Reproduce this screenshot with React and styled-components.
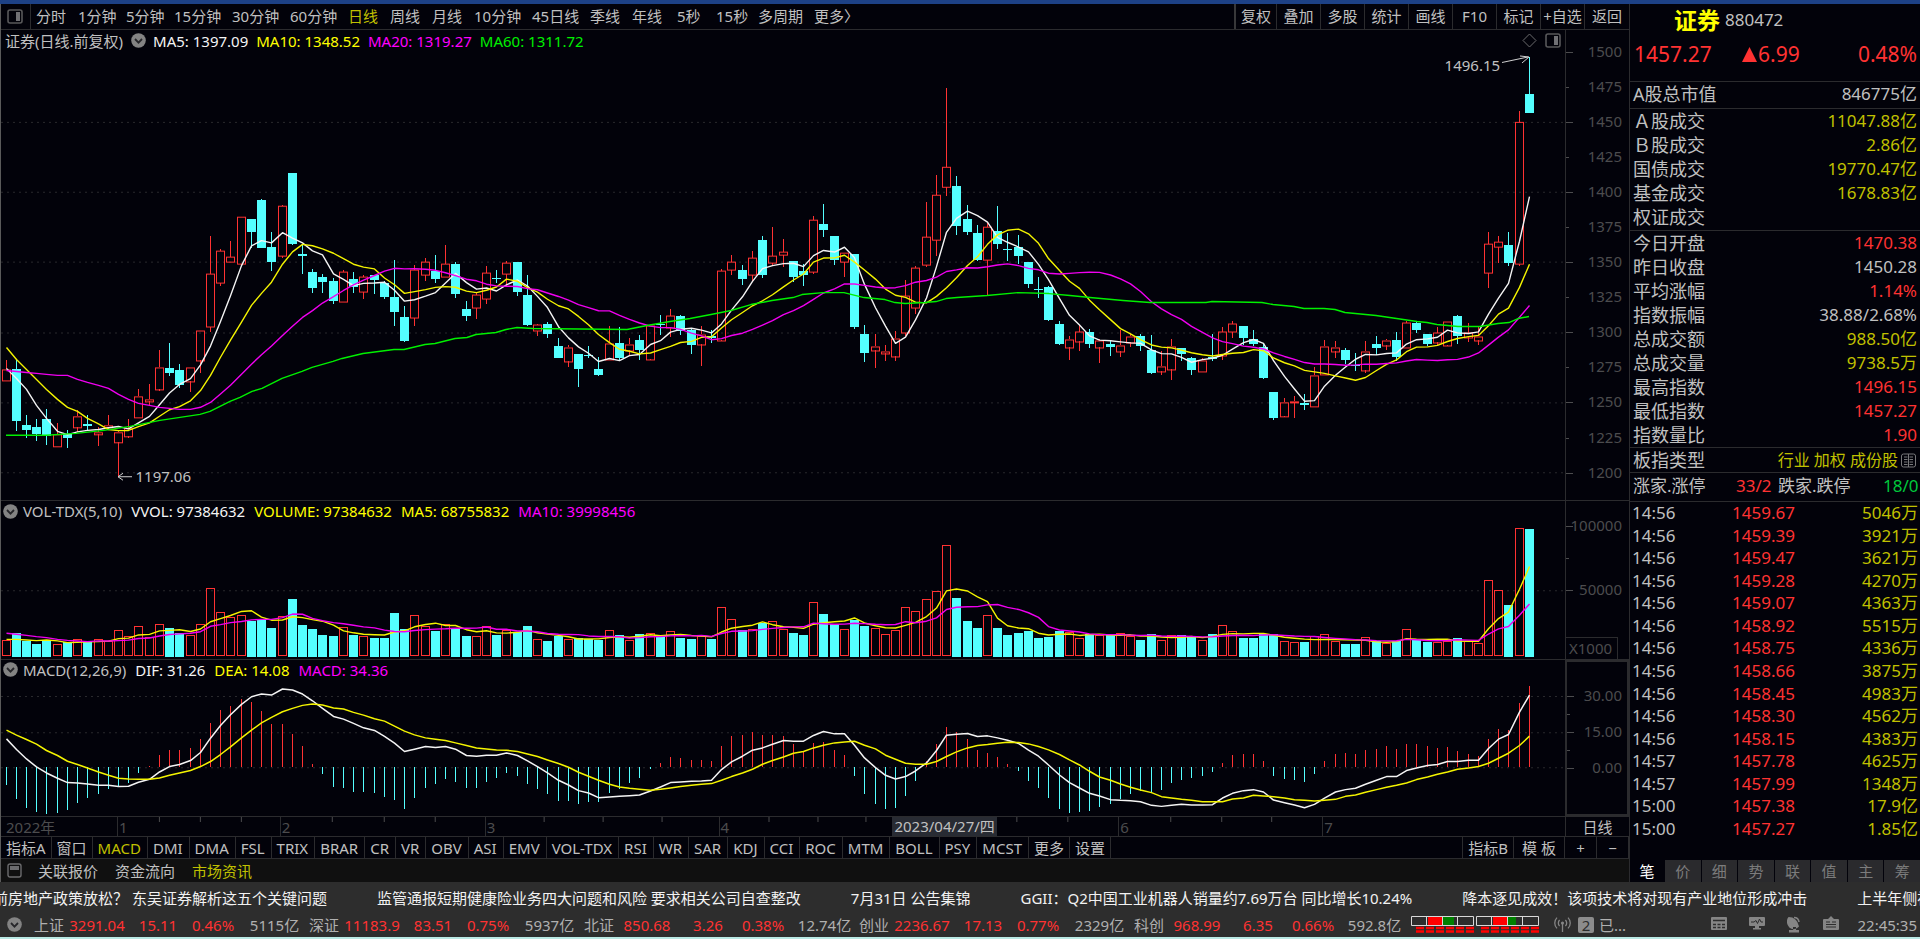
import React from "react";
import styled, { createGlobalStyle } from "styled-components";

const c = {
  bg: "#02020a",
  line: "#2b2b2e",
  text: "#c0c0c0",
  dim: "#4c4c4e",
  red: "#ff3232",
  cyan: "#54ffff",
  olive: "#c0c000",
  yellow: "#ffff00",
  magenta: "#ff00ff",
  green: "#00f000",
  bar: "#2d2d2d",
};

const GlobalStyle = createGlobalStyle`
  * { box-sizing: border-box; }
  body {
    margin: 0;
    background: ${c.bg};
    color: ${c.text};
    font-family: "Noto Sans", "Noto Sans CJK SC", sans-serif;
    font-size: 15px;
    line-height: 20px;
    overflow: hidden;
  }
  button {
    font: inherit;
    color: inherit;
    background: none;
    border: 0;
    padding: 0;
    white-space: nowrap;
    cursor: pointer;
  }
  a { color: inherit; text-decoration: none; }
  svg { display: block; flex: none; }
`;

/* ---------- chart data ---------- */

// [direction, high, body top, body bottom, low]; r = rising, c = falling
const candles = `
r 361 370 381 381|c 361 370 422 432|c 416 426 431 439|c 420 428 435 442|c 410 420 437 446
r 424 435 447 447|c 431 435 439 449|r 411 417 428 433|c 416 425 427 431|r 428 433 435 447
r 416 426 428 431|r 432 433 443 477|r 420 429 437 439|r 390 397 418 418|r 385 400 402 407
r 351 368 390 392|c 344 369 374 377|c 365 371 386 389|r 368 368 382 393|r 331 331 361 374
r 236 274 327 332|r 249 251 283 286|r 241 257 262 262|r 217 217 264 264|c 219 219 232 248
c 199 200 248 248|c 232 247 262 271|r 205 206 256 258|c 173 173 244 245|c 244 254 256 274
c 269 272 288 293|c 274 277 282 293|c 278 281 301 304|r 270 272 302 302|c 272 279 287 293
r 275 277 292 299|c 275 275 280 294|c 281 283 297 299|c 260 297 312 326|c 306 317 342 343
r 265 270 318 326|r 258 262 275 281|c 255 271 279 283|r 245 264 277 277|c 262 264 294 298
c 301 309 316 321|r 293 295 308 319|r 266 273 299 304|c 270 278 279 283|r 261 263 274 286
c 262 262 292 296|c 275 295 325 326|r 324 325 331 337|c 322 324 335 339|c 339 347 359 359
r 346 348 362 368|c 355 355 370 388|c 347 356 357 359|c 358 370 376 377|r 326 344 360 360
c 327 344 359 361|r 339 345 351 357|c 336 341 351 361|r 326 326 360 361|c 315 324 325 336
r 309 316 328 338|c 315 316 331 336|c 329 330 346 355|r 326 335 345 367|c 330 337 339 344
r 269 271 341 342|r 255 262 270 275|c 265 270 279 285|r 251 258 275 282|c 236 240 275 278
r 227 256 263 266|r 239 252 255 267|c 261 261 277 282|c 264 271 275 286|r 216 220 272 274
c 204 224 230 237|c 236 236 260 265|r 253 253 262 277|c 254 254 327 329|c 325 334 354 363
r 335 347 351 369|r 346 352 354 362|r 331 339 357 362|r 280 296 333 337|r 266 268 308 314
r 202 237 265 267|r 175 195 240 256|r 88 167 187 196|c 176 186 226 235|c 205 219 232 235
c 225 233 260 261|r 223 227 260 296|c 206 231 244 249|c 233 249 250 261|c 235 247 256 264
c 262 262 284 288|c 277 289 290 298|c 286 287 320 321|c 321 324 345 346|r 337 340 348 361
r 325 332 342 352|c 329 332 345 349|r 340 341 348 364|c 341 345 348 357|r 330 346 352 358
r 335 337 343 348|c 334 337 347 352|c 336 351 374 375|r 352 367 372 376|r 340 347 370 381
c 349 349 355 362|c 358 359 371 376|r 359 361 372 372|c 335 358 360 362|r 327 332 356 361
r 321 324 332 339|c 326 326 339 346|c 330 340 345 347|c 345 348 379 380|c 393 393 419 421
r 399 403 417 418|r 397 402 403 419|c 395 404 406 411|r 368 376 407 407|r 341 347 375 375
r 342 348 352 359|c 349 351 361 365|c 354 366 367 372|r 342 352 371 374|c 337 345 349 356
r 340 341 346 351|c 332 341 358 362|r 321 323 348 348|c 322 323 330 333|c 334 335 345 347
r 327 333 343 346|r 322 322 346 347|c 315 316 337 345|r 323 333 338 343|r 326 337 341 346
r 232 244 273 288|r 236 242 247 263|c 232 245 263 266|r 111 122 264 266|c 57 94 113 113`
  .trim()
  .split(/[|\n]/)
  .map((row) => {
    const [dir, ...v] = row.trim().split(/\s+/);
    const [high, top, bottom, low] = v.map(Number);
    return { up: dir === "r", high, top, bottom, low };
  });

// The lower panels are recorded at three units to the pixel.
const fine = (v) => 490 + v / 3;

const volume = [
  453, 432, 457, 465, 453, 465, 460, 450, 460, 450, 457, 423, 442, 412, 443, 404, 416, 432, 438, 405,
  296, 370, 384, 378, 395, 390, 416, 381, 330, 409, 420, 438, 442, 415, 438, 440, 446, 446, 371, 420,
  379, 412, 427, 405, 420, 442, 442, 412, 438, 423, 430, 412, 450, 457, 442, 450, 446, 450, 454, 423,
  438, 454, 435, 431, 438, 427, 446, 450, 440, 450, 355, 389, 424, 420, 401, 397, 420, 431, 438, 338,
  375, 405, 420, 393, 412, 417, 434, 424, 355, 367, 329, 307, 168, 326, 397, 416, 379, 416, 438, 431,
  427, 446, 443, 427, 428, 447, 435, 437, 438, 431, 442, 454, 435, 453, 438, 439, 442, 453, 435, 408,
  427, 446, 446, 435, 435, 457, 460, 460, 442, 434, 455, 465, 465, 445, 457, 461, 457, 419, 453, 460,
  460, 455, 446, 457, 461, 273, 303, 348, 117, 120,
];

const macd = [
  885, 928, 954, 965, 972, 969, 961, 938, 923, 911, 897, 888, 878, 850, 828, 796, 780, 780, 773, 746,
  698, 660, 649, 627, 637, 664, 702, 702, 732, 769, 822, 853, 890, 893, 906, 906, 909, 920, 931, 958,
  924, 893, 882, 868, 876, 893, 893, 876, 863, 850, 858, 882, 897, 912, 933, 933, 942, 935, 935, 909,
  897, 878, 863, 838, 818, 802, 803, 810, 811, 814, 768, 738, 736, 727, 735, 735, 739, 762, 782, 758,
  757, 780, 796, 857, 911, 942, 956, 953, 917, 872, 812, 762, 712, 727, 747, 779, 788, 802, 822, 843,
  872, 893, 923, 957, 968, 965, 962, 950, 942, 928, 911, 904, 905, 900, 879, 869, 863, 857, 846, 818,
  795, 792, 793, 813, 857, 867, 871, 875, 853, 813, 792, 788, 792, 780, 777, 768, 776, 762, 761, 768,
  773, 772, 784, 791, 798, 746, 716, 720, 638, 589,
];

const dif = [
  746, 778, 806, 830, 848, 864, 877, 878, 881, 885, 885, 889, 888, 876, 867, 845, 829, 823, 811, 787,
  744, 706, 674, 643, 620, 612, 615, 597, 600, 612, 632, 655, 679, 687, 700, 713, 721, 739, 759, 784,
  777, 769, 772, 769, 777, 796, 798, 795, 795, 788, 796, 812, 829, 848, 870, 884, 901, 908, 922, 920,
  918, 916, 914, 902, 890, 877, 875, 873, 872, 870, 838, 815, 798, 780, 773, 762, 751, 753, 753, 736,
  724, 731, 731, 765, 803, 832, 855, 866, 859, 842, 818, 781, 735, 732, 730, 739, 737, 743, 750, 760,
  780, 798, 824, 854, 877, 893, 909, 917, 928, 930, 931, 934, 945, 948, 945, 942, 944, 944, 943, 923,
  909, 901, 898, 905, 929, 937, 944, 952, 942, 923, 905, 898, 894, 882, 870, 859, 859, 841, 833, 826,
  823, 814, 814, 810, 810, 775, 747, 733, 666, 615,
];

const dea = [
  720, 735, 748, 762, 781, 796, 813, 823, 833, 845, 855, 864, 866, 867, 867, 863, 855, 848, 841, 829,
  814, 793, 770, 743, 720, 698, 682, 665, 655, 646, 642, 645, 654, 657, 667, 675, 686, 693, 708, 723,
  734, 743, 747, 751, 758, 766, 773, 776, 779, 780, 784, 791, 799, 809, 820, 831, 846, 858, 870, 882,
  890, 894, 897, 900, 897, 893, 889, 885, 882, 880, 870, 859, 848, 837, 822, 811, 800, 789, 784, 773,
  765, 758, 755, 753, 765, 776, 795, 807, 819, 822, 822, 814, 799, 785, 773, 766, 763, 759, 756, 757,
  761, 769, 779, 793, 809, 824, 843, 860, 870, 881, 891, 899, 907, 919, 923, 927, 930, 934, 934, 934,
  926, 923, 915, 917, 919, 923, 928, 930, 932, 930, 927, 918, 914, 906, 898, 891, 885, 878, 868, 860,
  852, 845, 837, 833, 829, 819, 804, 789, 766, 738,
];

const ma60 =
  "6,436 46,436 76,434 104,431 130,427 160,421 200,415 210,412 220,407 230,402 240,398 252,392 262,389 282,379 302,372 312,368 333,362 342,359 363,354 394,350 404,350 425,345 435,344 455,339 467,338 476,335 496,333 506,330 517,328 533,329 627,330 647,326 670,322 690,319 711,315 731,311 751,305 772,301 793,298 802,295 823,293 844,293 864,298 885,300 895,303 905,304 925,303 936,302 946,299 957,298 987,296 1018,293 1049,294 1070,296 1090,298 1123,301 1150,303 1206,303 1212,302 1262,303 1273,305 1294,307 1304,309 1324,309 1335,310 1345,313 1376,316 1417,322 1427,323 1437,325 1458,327 1480,327 1498,324 1509,323 1518,319 1529,317";

const xAt = (i) => Math.floor(6 + i * 10.224);

// Simple moving average; the first values come from before the visible range.
const average = (values, n, lead) =>
  values.map((_, i) =>
    i < lead.length ? lead[i] : values.slice(i - n + 1, i + 1).reduce((a, b) => a + b, 0) / n
  );

const points = (values) => values.map((v, i) => `${xAt(i) + 0.5},${v.toFixed(1)}`).join(" ");

const closes = candles.map((k) => (k.up ? k.top : k.bottom));
const ma5 = average(closes, 5, [369, 379, 390, 406]);
const ma10 = average(closes, 10, [348, 360, 370, 380, 390, 400, 408, 412, 419]);
const ma20 = average(closes, 20, [
  371, 372, 373, 374, 375, 376, 376, 380, 383, 386, 389, 395, 400, 404, 406, 408, 409, 410, 410,
]);
const volTops = volume.map(fine);
const vol5 = average(volTops, 5, [450, 450, 452, 454].map(fine));
const vol10 = average(volTops, 10, [432, 435, 438, 442, 445, 450, 453, 455, 457].map(fine));

/* ---------- shell ---------- */

const Page = styled.div`
  display: flex;
  flex-direction: column;
  height: 100vh;
  min-height: 900px;
  border-top: 4px solid #1d4186;
  border-bottom: 2px solid #b9e9e4;
`;

const Main = styled.main`
  flex: 1;
  min-height: 0;
  display: grid;
  grid-template-columns: minmax(0, 1fr) 291px;
`;

const ChartColumn = styled.section`
  display: flex;
  flex-direction: column;
  min-height: 0;
  border-left: 1px solid #5a5a5a;
`;

const Toolbar = styled.nav`
  height: 26px;
  flex: none;
  display: flex;
  border-bottom: 1px solid ${c.line};
`;

const LayoutButton = styled.button`
  width: 30px;
  padding-left: 6px;
  margin-right: 5px;
  border-right: 1px solid ${c.line};
`;

const PeriodButton = styled.button`
  width: ${(p) => p.$width}px;
  padding-bottom: 1px;
  text-align: left;
  color: ${(p) => (p.$active ? c.olive : c.text)};
`;

const ToolGroup = styled.div`
  display: flex;
  margin-left: auto;
  border-left: 2px solid #38383a;
`;

const ToolButton = styled.button`
  width: 44px;
  padding-bottom: 1px;
  border-right: 1px solid ${c.line};
  &:first-child { width: 41px; }
  &:last-child { border-right: 0; }
`;

/* ---------- panels ---------- */

const Panel = styled.div`
  flex: ${(p) => p.$weight} 1 0;
  min-height: 0;
  display: grid;
  grid-template-columns: minmax(0, 1fr) 64px;
  border-bottom: 1px solid ${c.line};
`;

const PlotArea = styled.div`
  position: relative;
  display: flex;
  flex-direction: column;
  min-height: 0;
`;

const PanelHeader = styled.header`
  flex: none;
  height: 20px;
  display: flex;
  align-items: center;
  gap: 9px;
  padding: 0 4px 0 2px;
  white-space: nowrap;
`;

const PriceHeader = styled(PanelHeader)`
  height: 24px;
  gap: 8px;
  padding: 0 4px 3px;
`;

const PanelName = styled.span`
  display: flex;
  align-items: center;
  gap: 6px;
`;

const Reading = styled.span`
  color: ${(p) => p.$color};
`;

const HeaderTools = styled.div`
  display: flex;
  gap: 8px;
  margin-left: auto;
`;

const Plot = styled.svg`
  flex: 1;
  width: 100%;
  min-height: 0;
`;

const PriceFlag = styled.span`
  position: absolute;
  left: ${(p) => p.$left}%;
  top: ${(p) => p.$top}%;
`;

const Axis = styled.div`
  display: flex;
  flex-direction: column;
  min-height: 0;
  padding: ${(p) => p.$pad};
  border-left: 1px solid ${c.line};
  color: ${c.dim};
`;

const FramedAxis = styled(Axis)`
  border: 2px solid ${c.line};
`;

const AxisLabel = styled.div`
  position: relative;
  ${(p) => (p.$height ? `height: ${p.$height}px;` : "flex: 1;")}
  display: flex;
  align-items: center;
  justify-content: flex-end;
  padding: 0 ${(p) => p.$inset || 7}px 2px 0;
  &::before {
    content: "";
    position: absolute;
    left: 0;
    top: 50%;
    width: ${(p) => (p.$minor ? 3 : 7)}px;
    border-top: 1px solid ${c.dim};
  }
`;

const Unit = styled.div`
  margin-top: auto;
  width: 52px;
  height: 22px;
  padding-left: 3px;
  border: 1px solid ${c.line};
  border-left: 0;
  border-bottom: 0;
`;

/* ---------- time axis and indicator bars ---------- */

const TimeRow = styled.div`
  flex: none;
  height: 20px;
  display: grid;
  grid-template-columns: minmax(0, 1fr) 64px;
  border-bottom: 1px solid ${c.line};
`;

const TimeAxis = styled.div`
  position: relative;
  display: grid;
  grid-template-columns: 116fr 163fr 205fr 234fr 174fr 226fr 204fr 243fr;
  color: ${c.dim};
`;

const TimeTicks = styled.svg`
  position: absolute;
  inset: 0;
  width: 100%;
  height: 5px;
`;

const Month = styled.div`
  padding-left: ${(p) => (p.$plain ? 5 : 1)}px;
  border-left: ${(p) => (p.$plain ? "0" : `1px solid ${c.line}`)};
`;

const DateMark = styled.span`
  justify-self: start;
  height: 19px;
  padding: 0 2px;
  background: #282b33;
  color: ${c.text};
  line-height: 18px;
  white-space: nowrap;
`;

const PeriodName = styled.div`
  border-left: 1px solid ${c.line};
  text-align: center;
`;

const IndicatorBar = styled.nav`
  flex: none;
  height: 22px;
  display: flex;
  border-bottom: 1px solid ${c.line};
`;

const IndicatorButton = styled.button`
  padding: 0 ${(p) => (p.$latin ? 6 : 5)}px 0 5px;
  border-right: 1px solid ${c.line};
  color: ${(p) => (p.$active ? c.olive : c.text)};
`;

const TemplateButton = styled(IndicatorButton)`
  padding: 0 8px;
`;

const IndicatorTools = styled.div`
  display: flex;
  margin-left: auto;
  border-left: 1px solid ${c.line};
`;

const ZoomButton = styled.button`
  width: 32px;
  border-right: 1px solid ${c.line};
`;

const InfoTabs = styled.nav`
  flex: none;
  height: 23px;
  display: flex;
  align-items: center;
  gap: 17px;
  padding-left: 6px;
  background: #101010;
`;

const InfoTab = styled.button`
  color: ${(p) => (p.$active ? c.olive : c.text)};
`;

/* ---------- quote column ---------- */

const QuoteColumn = styled.aside`
  display: flex;
  flex-direction: column;
  min-height: 0;
  overflow: hidden;
  border-left: 1px solid ${c.line};
`;

const QuoteHead = styled.header`
  flex: none;
  height: 78px;
  border-bottom: 1px solid ${c.line};
`;

const QuoteTitle = styled.h1`
  display: flex;
  align-items: center;
  gap: 5px;
  margin: 0;
  height: 32px;
  padding-left: 44px;
  font-size: 17px;
  font-weight: 400;
`;

const QuoteName = styled.span`
  color: ${c.yellow};
  font-size: 23px;
  font-weight: 700;
`;

const QuotePrice = styled.div`
  display: grid;
  grid-template-columns: 108px 1fr auto;
  align-items: center;
  height: 36px;
  padding: 0 3px 0 4px;
  color: ${c.red};
  font-size: 21px;
`;

const Change = styled.span`
  display: flex;
  align-items: center;
  gap: 1px;
`;

const Facts = styled.dl`
  flex: none;
  margin: 0;
  padding: 0 3px ${(p) => p.$foot || 0}px;
  border-bottom: 1px solid ${c.line};
`;

const Fact = styled.div`
  height: 24px;
  display: flex;
  align-items: center;
  justify-content: space-between;
`;

const FactName = styled.dt`
  font-size: 18px;
`;

const FactValue = styled.dd`
  display: flex;
  align-items: center;
  margin: 0;
  gap: 2px;
  color: ${(p) => p.$color || c.text};
  font-size: ${(p) => (p.$small ? 16 : 17)}px;
`;

const Breadth = styled.div`
  flex: none;
  display: grid;
  grid-template-columns: 103px 42px 105px auto;
  align-items: center;
  height: 29px;
  padding: 0 0 2px 3px;
  border-bottom: 1px solid ${c.line};
  font-size: 17px;
  white-space: nowrap;
`;

const TickTable = styled.table`
  width: 100%;
  height: 338px;
  border-collapse: collapse;
  font-size: 17px;
  td { padding: 0 2px; }
`;

const TickTime = styled.td`
  width: 100px;
`;

const TickPrice = styled.td`
  color: ${c.red};
`;

const TickVolume = styled.td`
  color: ${c.olive};
  text-align: right;
`;

const QuoteTabs = styled.nav`
  display: flex;
  height: 22px;
  margin-top: auto;
`;

const QuoteTab = styled.button`
  flex: 1;
  border-left: 1px solid ${c.bg};
  background: #2a2a2d;
  color: #7c7c7c;
  font-size: 15px;
  &:first-child {
    flex: 0 0 34px;
    border-left: 0;
    background: ${c.bg};
    color: #ffffff;
  }
`;

/* ---------- footer ---------- */

const Footer = styled.footer`
  flex: none;
  height: 55px;
  background: ${c.bar};
  overflow: hidden;
`;

const News = styled.div`
  display: flex;
  align-items: center;
  gap: 50px;
  height: 32px;
  margin-left: -7px;
  color: #f2f2f2;
  white-space: nowrap;
`;

const Status = styled.div`
  display: flex;
  align-items: center;
  height: 21px;
  padding: 0 3px 0 7px;
`;

const Chevron = styled.button`
  flex: none;
  width: ${(p) => p.$width || 14}px;
`;

const Index = styled.div`
  flex: none;
  display: grid;
  grid-template-columns: 30px 66px 56px 54px 69px;
  text-align: center;
  color: ${c.red};
`;

const Grey = styled.span`
  color: #b0b0b0;
`;

const GaugeSlot = styled.div`
  padding: 0 15px 0 2px;
`;

const Badge = styled.span`
  width: 16px;
  height: 16px;
  margin: 0 5px 0 7px;
  border-radius: 2px;
  background: #8c8c8c;
  color: ${c.bar};
  line-height: 16px;
  text-align: center;
`;

const StatusIcons = styled.div`
  display: flex;
  gap: 22px;
  margin-left: auto;
  padding-right: 18px;
`;

const Clock = styled.time`
  color: #b0b0b0;
`;

/* ---------- drawings ---------- */

const SplitIcon = () => (
  <svg width="16" height="15" viewBox="0 0 16 15" fill="none" aria-hidden="true">
    <rect x="1" y="1" width="14" height="13" rx="2" stroke="#58585a" strokeWidth="1.6" />
    <rect x="9" y="3" width="4" height="9" fill="#707074" />
  </svg>
);

const DiamondIcon = () => (
  <svg width="15" height="15" viewBox="0 0 15 15" fill="none" aria-hidden="true">
    <path d="M7.5 1 14 7.5 7.5 14 1 7.5Z" stroke="#6a6a6c" />
  </svg>
);

const ChevronIcon = () => (
  <svg width="15" height="15" viewBox="0 0 15 15" fill="none" aria-hidden="true">
    <circle cx="7.5" cy="7.5" r="7.3" fill="#838383" />
    <path d="m4 6 3.5 3.6L11 6" stroke="#26262a" strokeWidth="1.8" />
  </svg>
);

const CollapseIcon = () => (
  <svg width="15" height="15" viewBox="0 0 15 15" fill="none" aria-hidden="true">
    <rect x="1" y="1" width="13" height="13" rx="2" stroke="#6c6c6e" strokeWidth="1.4" />
    <rect x="3" y="3" width="9" height="4" fill="#6c6c6e" />
  </svg>
);

const BookIcon = () => (
  <svg width="17" height="15" viewBox="0 0 17 15" fill="none" stroke="#77777a" aria-hidden="true">
    <rect x="1.5" y="1" width="14" height="13" rx="2" />
    <path d="M4 4h3.5M4 6.5h3.5M4 9h3.5M4 11.5h3.5M9.5 4H13M9.5 6.5H13M9.5 9H13M9.5 11.5H13M8.5 1v13" />
  </svg>
);

const UpTriangle = () => (
  <svg width="15" height="15" viewBox="0 0 15 15" aria-hidden="true">
    <path d="M7.5 0 15 15H0Z" fill={c.red} />
  </svg>
);

const Gauge = ({ x, green }) => (
  <g transform={`translate(${x} 0)`}>
    <rect x="17" y="2" width="15" height="8" fill="#ff0000" />
    <rect x="32" y="2" width={green} height="8" fill="#008000" />
    <path d="M.5 1.5h62v9H.5ZM15.5 1v9M31.5 1v9M46.5 1v9" fill="none" stroke="#d8d8d8" />
    {[0, 1, 2, 3, 4, 5].map((n) => (
      <path key={n} d={`M${5 + n * 10} 13h8M${5 + n * 10} 16.5h8`} stroke="#ff0000" strokeWidth="2.4" />
    ))}
  </g>
);

const Gauges = () => (
  <svg width="128" height="19" viewBox="0 0 128 19" aria-label="涨跌分布">
    <Gauge x={0} green={11} />
    <Gauge x={65} green={8} />
  </svg>
);

const AntennaIcon = () => (
  <svg width="17" height="17" viewBox="0 0 17 17" fill="none" stroke="#858585" strokeWidth="1.3" aria-hidden="true">
    <circle cx="8.5" cy="7" r="1.6" fill="#858585" stroke="none" />
    <path d="M8.5 8v8M5.6 10a4.2 4.2 0 0 1 0-6M11.4 10a4.2 4.2 0 0 0 0-6M3 12.4a7.6 7.6 0 0 1 0-10.8M14 12.4a7.6 7.6 0 0 0 0-10.8" />
  </svg>
);

const KeyboardIcon = () => (
  <svg width="16" height="14" viewBox="0 0 16 14" aria-hidden="true">
    <rect y="1" width="16" height="13" rx="1" fill="#858585" />
    <path d="M2 4.5h12M2 8.5h3M6.5 8.5h3M11 8.5h3M2 11.5h3M6.5 11.5h3M11 11.5h3" stroke={c.bar} strokeWidth="1.3" />
  </svg>
);

const MonitorIcon = () => (
  <svg width="16" height="14" viewBox="0 0 16 14" aria-hidden="true">
    <path d="M1 1h14q1 0 1 1v7q0 1-1 1h-5v2h2v1.5H4V12h2v-2H1q-1 0-1-1V2q0-1 1-1Z" fill="#858585" />
    <path d="M2 6h3l2-1.5 1.5 3L10.5 3 12 6h2" fill="none" stroke={c.bar} />
  </svg>
);

const DishIcon = () => (
  <svg width="14" height="17" viewBox="0 0 14 17" fill="#858585" aria-hidden="true">
    <path d="M1.500 1a6.500 7 0 0 0 10.500 9.500ZM6 11h3v3h3v2.500H2V14h4Z" />
    <path d="M1.500 1Q10 1 12 10.500Q4 9 1.500 1Z" />
    <path d="M7 1.500q4.500 0 5 4.500" fill="none" stroke="#858585" strokeWidth="1.500" />
  </svg>
);

const CaseIcon = () => (
  <svg width="16" height="14" viewBox="0 0 16 14" aria-hidden="true">
    <path d="M1 3h4l3-3 3 3h4q1 0 1 1v9q0 1-1 1H1q-1 0-1-1V4q0-1 1-1Z" fill="#858585" />
    <path d="M3 6h4M3 8.5h10M3 11h10M9 6h4" stroke={c.bar} strokeWidth="1.2" />
  </svg>
);

const GridLines = ({ at }) =>
  at.map((y) => <path key={y} d={`M0 ${y}H1564`} stroke="#29292d" strokeDasharray="2 4" fill="none" />);

const Curve = ({ pts, color, width = 1.4 }) => (
  <polyline points={pts} fill="none" stroke={color} strokeWidth={width} strokeLinejoin="round" />
);

const CandleMarks = () =>
  candles.map((k, i) => {
    const x = xAt(i) - 1;
    const h = Math.max(k.bottom - k.top, 1);
    const color = k.up ? c.red : c.cyan;
    return (
      <g key={i} shapeRendering="crispEdges">
        <rect x={x} y={k.high} width="1" height={k.top - k.high} fill={color} />
        <rect x={x} y={k.bottom} width="1" height={Math.max(k.low - k.bottom, 0)} fill={color} />
        {k.up ? (
          <rect x={x - 3.5} y={k.top + 0.5} width="8" height={h} fill="none" stroke={color} />
        ) : (
          <rect x={x - 4} y={k.top} width="9" height={h} fill={color} />
        )}
      </g>
    );
  });

const PricePlot = () => (
  <Plot viewBox="0 54 1564 447" preserveAspectRatio="none" aria-label="日线">
    <GridLines at={[122.5, 192.5, 262.5, 333.5, 403.5, 473.5]} />
    <CandleMarks />
    <g transform="translate(-1 0)">
      <Curve pts={points(ma5)} color="#f4f4f4" />
      <Curve pts={points(ma10)} color="#f4f400" />
      <Curve pts={points(ma20)} color="#f000f0" />
      <Curve pts={ma60} color={c.green} />
    </g>
    <path d="M1501 62.5 1527 57M1519 56l9 1-7 6" stroke="#d0d0d0" fill="none" />
    <path d="M131 477.5H117M122 474l-5 3.5 5 3.5" stroke="#d0d0d0" fill="none" />
  </Plot>
);

const VolumePlot = () => (
  <Plot viewBox="0 522 1564 137" preserveAspectRatio="none" aria-label="成交量">
    <GridLines at={[591.5]} />
    <g shapeRendering="crispEdges">
      {volTops.map((v, i) => {
        const x = xAt(i) - 1;
        const y = Math.round(v);
        return candles[i].up ? (
          <rect key={i} x={x - 3.5} y={y + 0.5} width="8" height={656 - y} fill="none" stroke={c.red} />
        ) : (
          <rect key={i} x={x - 4} y={y} width="9" height={658 - y} fill={c.cyan} />
        );
      })}
    </g>
    <g transform="translate(-1 0)">
      <Curve pts={points(vol5)} color="#f4f400" />
      <Curve pts={points(vol10)} color="#f000f0" />
    </g>
  </Plot>
);

const MacdPlot = () => (
  <Plot viewBox="0 680 1564 136" preserveAspectRatio="none" aria-label="MACD">
    <GridLines at={[696.5, 732.5, 767.5]} />
    <g shapeRendering="crispEdges">
      {macd.map((v, i) => {
        const y = Math.round(fine(v));
        return (
          <rect
            key={i}
            x={xAt(i) - 1}
            y={Math.min(y, 767)}
            width="1"
            height={Math.abs(y - 767)}
            fill={y < 767 ? c.red : c.cyan}
          />
        );
      })}
    </g>
    <g transform="translate(-1 0)">
      <Curve pts={points(dif.map(fine))} color="#f4f4f4" width={1.5} />
      <Curve pts={points(dea.map(fine))} color="#f4f400" width={1.5} />
    </g>
  </Plot>
);

/* ---------- texts ---------- */

const periods = [
  ["分时", 42], ["1分钟", 48], ["5分钟", 48], ["15分钟", 58], ["30分钟", 58], ["60分钟", 58],
  ["日线", 42], ["周线", 42], ["月线", 42], ["10分钟", 58], ["45日线", 58], ["季线", 42],
  ["年线", 45], ["5秒", 39], ["15秒", 42], ["多周期", 56], ["更多〉", 48],
];
const tools = ["复权", "叠加", "多股", "统计", "画线", "F10", "标记", "+自选", "返回"];
const prices = [1500, 1475, 1450, 1425, 1400, 1375, 1350, 1325, 1300, 1275, 1250, 1225, 1200];
const indicators = [
  "指标A", "窗口", "MACD", "DMI", "DMA", "FSL", "TRIX", "BRAR", "CR", "VR", "OBV", "ASI", "EMV",
  "VOL-TDX", "RSI", "WR", "SAR", "KDJ", "CCI", "ROC", "MTM", "BOLL", "PSY", "MCST", "更多", "设置",
];
const turnover = [
  ["Ａ股成交", "11047.88亿"], ["Ｂ股成交", "2.86亿"], ["国债成交", "19770.47亿"],
  ["基金成交", "1678.83亿"], ["权证成交", ""],
];
const details = [
  ["今日开盘", "1470.38", c.red], ["昨日收盘", "1450.28", c.text], ["平均涨幅", "1.14%", c.red],
  ["指数振幅", "38.88/2.68%", c.text], ["总成交额", "988.50亿", c.olive], ["总成交量", "9738.5万", c.olive],
  ["最高指数", "1496.15", c.red], ["最低指数", "1457.27", c.red], ["指数量比", "1.90", c.red],
];
const ticks = [
  ["14:56", "1459.67", "5046万"], ["14:56", "1459.39", "3921万"], ["14:56", "1459.47", "3621万"],
  ["14:56", "1459.28", "4270万"], ["14:56", "1459.07", "4363万"], ["14:56", "1458.92", "5515万"],
  ["14:56", "1458.75", "4336万"], ["14:56", "1458.66", "3875万"], ["14:56", "1458.45", "4983万"],
  ["14:56", "1458.30", "4562万"], ["14:56", "1458.15", "4383万"], ["14:57", "1457.78", "4625万"],
  ["14:57", "1457.99", "1348万"], ["15:00", "1457.38", "17.9亿"], ["15:00", "1457.27", "1.85亿"],
];
const news = [
  "前房地产政策放松？ 东吴证券解析这五个关键问题",
  "监管通报短期健康险业务四大问题和风险 要求相关公司自查整改",
  "7月31日 公告集锦",
  "GGII：Q2中国工业机器人销量约7.69万台 同比增长10.24%",
  "降本逐见成效！该项技术将对现有产业地位形成冲击",
  "上半年侧袖",
];
const indices = [
  ["上证", "3291.04", "15.11", "0.46%", "5115亿"],
  ["深证", "11183.9", "83.51", "0.75%", "5937亿"],
  ["北证", "850.68", "3.26", "0.38%", "12.74亿"],
  ["创业", "2236.67", "17.13", "0.77%", "2329亿"],
  ["科创", "968.99", "6.35", "0.66%", "592.8亿"],
];
const minorTicks = [158, 199, 240, 331, 383, 434, 543, 602, 661, 768, 817, 865, 1016, 1067, 1170, 1221, 1271];

export default function App() {
  return (
    <>
      <GlobalStyle />
      <Page>
        <Main>
          <ChartColumn>
            <Toolbar>
              <LayoutButton aria-label="布局"><SplitIcon /></LayoutButton>
              {periods.map(([name, width]) => (
                <PeriodButton key={name} $width={width} $active={name === "日线"}>{name}</PeriodButton>
              ))}
              <ToolGroup>
                {tools.map((name) => <ToolButton key={name}>{name}</ToolButton>)}
              </ToolGroup>
            </Toolbar>

            <Panel $weight={472}>
              <PlotArea>
                <PriceHeader>
                  <span>证券(日线.前复权)</span>
                  <Chevron aria-label="展开"><ChevronIcon /></Chevron>
                  <Reading $color="#f4f4f4">MA5: 1397.09</Reading>
                  <Reading $color={c.yellow}>MA10: 1348.52</Reading>
                  <Reading $color={c.magenta}>MA20: 1319.27</Reading>
                  <Reading $color={c.green}>MA60: 1311.72</Reading>
                  <HeaderTools><DiamondIcon /><SplitIcon /></HeaderTools>
                </PriceHeader>
                <PricePlot />
                <PriceFlag $left={92.3} $top={5.3}>1496.15</PriceFlag>
                <PriceFlag $left={8.6} $top={92.8}>1197.06</PriceFlag>
              </PlotArea>
              <Axis $pad="4px 0 10px">
                {prices.map((p, i) => <AxisLabel key={p} $minor={i % 2 === 1}>{p}</AxisLabel>)}
              </Axis>
            </Panel>

            <Panel $weight={158}>
              <PlotArea>
                <PanelHeader>
                  <PanelName>
                    <Chevron aria-label="展开"><ChevronIcon /></Chevron>
                    VOL-TDX(5,10)
                  </PanelName>
                  <Reading $color="#f4f4f4">VVOL: 97384632</Reading>
                  <Reading $color={c.yellow}>VOLUME: 97384632</Reading>
                  <Reading $color={c.yellow}>MA5: 68755832</Reading>
                  <Reading $color={c.magenta}>MA10: 39998456</Reading>
                </PanelHeader>
                <VolumePlot />
              </PlotArea>
              <Axis $pad="9px 0 0">
                <AxisLabel $height={32}>100000</AxisLabel>
                <AxisLabel $height={32} $minor />
                <AxisLabel $height={32}>50000</AxisLabel>
                <Unit>X1000</Unit>
              </Axis>
            </Panel>

            <Panel $weight={157}>
              <PlotArea>
                <PanelHeader>
                  <PanelName>
                    <Chevron aria-label="展开"><ChevronIcon /></Chevron>
                    MACD(12,26,9)
                  </PanelName>
                  <Reading $color="#f4f4f4">DIF: 31.26</Reading>
                  <Reading $color={c.yellow}>DEA: 14.08</Reading>
                  <Reading $color={c.magenta}>MACD: 34.36</Reading>
                </PanelHeader>
                <MacdPlot />
              </PlotArea>
              <FramedAxis $pad="25px 0 0">
                <AxisLabel $height={18} $inset={5}>30.00</AxisLabel>
                <AxisLabel $height={18} $minor />
                <AxisLabel $height={18} $inset={5}>15.00</AxisLabel>
                <AxisLabel $height={18} $minor />
                <AxisLabel $height={18} $inset={5}>0.00</AxisLabel>
              </FramedAxis>
            </Panel>

            <TimeRow>
              <TimeAxis>
                <TimeTicks viewBox="0 0 1565 5" preserveAspectRatio="none">
                  {minorTicks.map((x) => <path key={x} d={`M${x}.5 0v5`} stroke={c.dim} />)}
                </TimeTicks>
                <Month $plain>2022年</Month>
                <Month>1</Month>
                <Month>2</Month>
                <Month>3</Month>
                <Month>4</Month>
                <DateMark>2023/04/27/四</DateMark>
                <Month>6</Month>
                <Month>7</Month>
              </TimeAxis>
              <PeriodName>日线</PeriodName>
            </TimeRow>

            <IndicatorBar>
              {indicators.map((name) => (
                <IndicatorButton key={name} $active={name === "MACD"} $latin={/^[A-Z]/.test(name)}>
                  {name}
                </IndicatorButton>
              ))}
              <IndicatorTools>
                <IndicatorButton>指标B</IndicatorButton>
                <TemplateButton>模 板</TemplateButton>
                <ZoomButton>+</ZoomButton>
                <ZoomButton>−</ZoomButton>
              </IndicatorTools>
            </IndicatorBar>

            <InfoTabs>
              <Chevron aria-label="收起"><CollapseIcon /></Chevron>
              <InfoTab>关联报价</InfoTab>
              <InfoTab>资金流向</InfoTab>
              <InfoTab $active>市场资讯</InfoTab>
            </InfoTabs>
          </ChartColumn>

          <QuoteColumn>
            <QuoteHead>
              <QuoteTitle><QuoteName>证券</QuoteName>880472</QuoteTitle>
              <QuotePrice>
                <span>1457.27</span>
                <Change><UpTriangle />6.99</Change>
                <span>0.48%</span>
              </QuotePrice>
            </QuoteHead>
            <Facts $foot={2}>
              <Fact><FactName>A股总市值</FactName><FactValue>846775亿</FactValue></Fact>
            </Facts>
            <Facts $foot={1}>
              {turnover.map(([name, value]) => (
                <Fact key={name}><FactName>{name}</FactName><FactValue $color={c.olive}>{value}</FactValue></Fact>
              ))}
            </Facts>
            <Facts>
              {details.map(([name, value, color]) => (
                <Fact key={name}><FactName>{name}</FactName><FactValue $color={color}>{value}</FactValue></Fact>
              ))}
            </Facts>
            <Facts>
              <Fact>
                <FactName>板指类型</FactName>
                <FactValue $color={c.olive} $small>行业 加权 成份股<BookIcon /></FactValue>
              </Fact>
            </Facts>
            <Breadth>
              <span>涨家.涨停</span>
              <Reading $color={c.red}>33/2</Reading>
              <span>跌家.跌停</span>
              <Reading $color="#00c83c">18/0</Reading>
            </Breadth>
            <TickTable>
              <tbody>
                {ticks.map(([time, price, vol]) => (
                  <tr key={price}>
                    <TickTime>{time}</TickTime>
                    <TickPrice>{price}</TickPrice>
                    <TickVolume>{vol}</TickVolume>
                  </tr>
                ))}
              </tbody>
            </TickTable>
            <QuoteTabs>
              {[..."笔价细势联值主筹"].map((name) => <QuoteTab key={name}>{name}</QuoteTab>)}
            </QuoteTabs>
          </QuoteColumn>
        </Main>

        <Footer>
          <News>
            {news.map((item) => <a key={item} href="#news">{item}</a>)}
          </News>
          <Status>
            <Chevron $width={27} aria-label="展开"><ChevronIcon /></Chevron>
            {indices.map(([name, ...v]) => (
              <Index key={name}>
                <Grey>{name}</Grey>
                <span>{v[0]}</span>
                <span>{v[1]}</span>
                <span>{v[2]}</span>
                <Grey>{v[3]}</Grey>
              </Index>
            ))}
            <GaugeSlot><Gauges /></GaugeSlot>
            <AntennaIcon />
            <Badge>2</Badge>
            <Grey>已...</Grey>
            <StatusIcons><KeyboardIcon /><MonitorIcon /><DishIcon /><CaseIcon /></StatusIcons>
            <Clock>22:45:35</Clock>
          </Status>
        </Footer>
      </Page>
    </>
  );
}
